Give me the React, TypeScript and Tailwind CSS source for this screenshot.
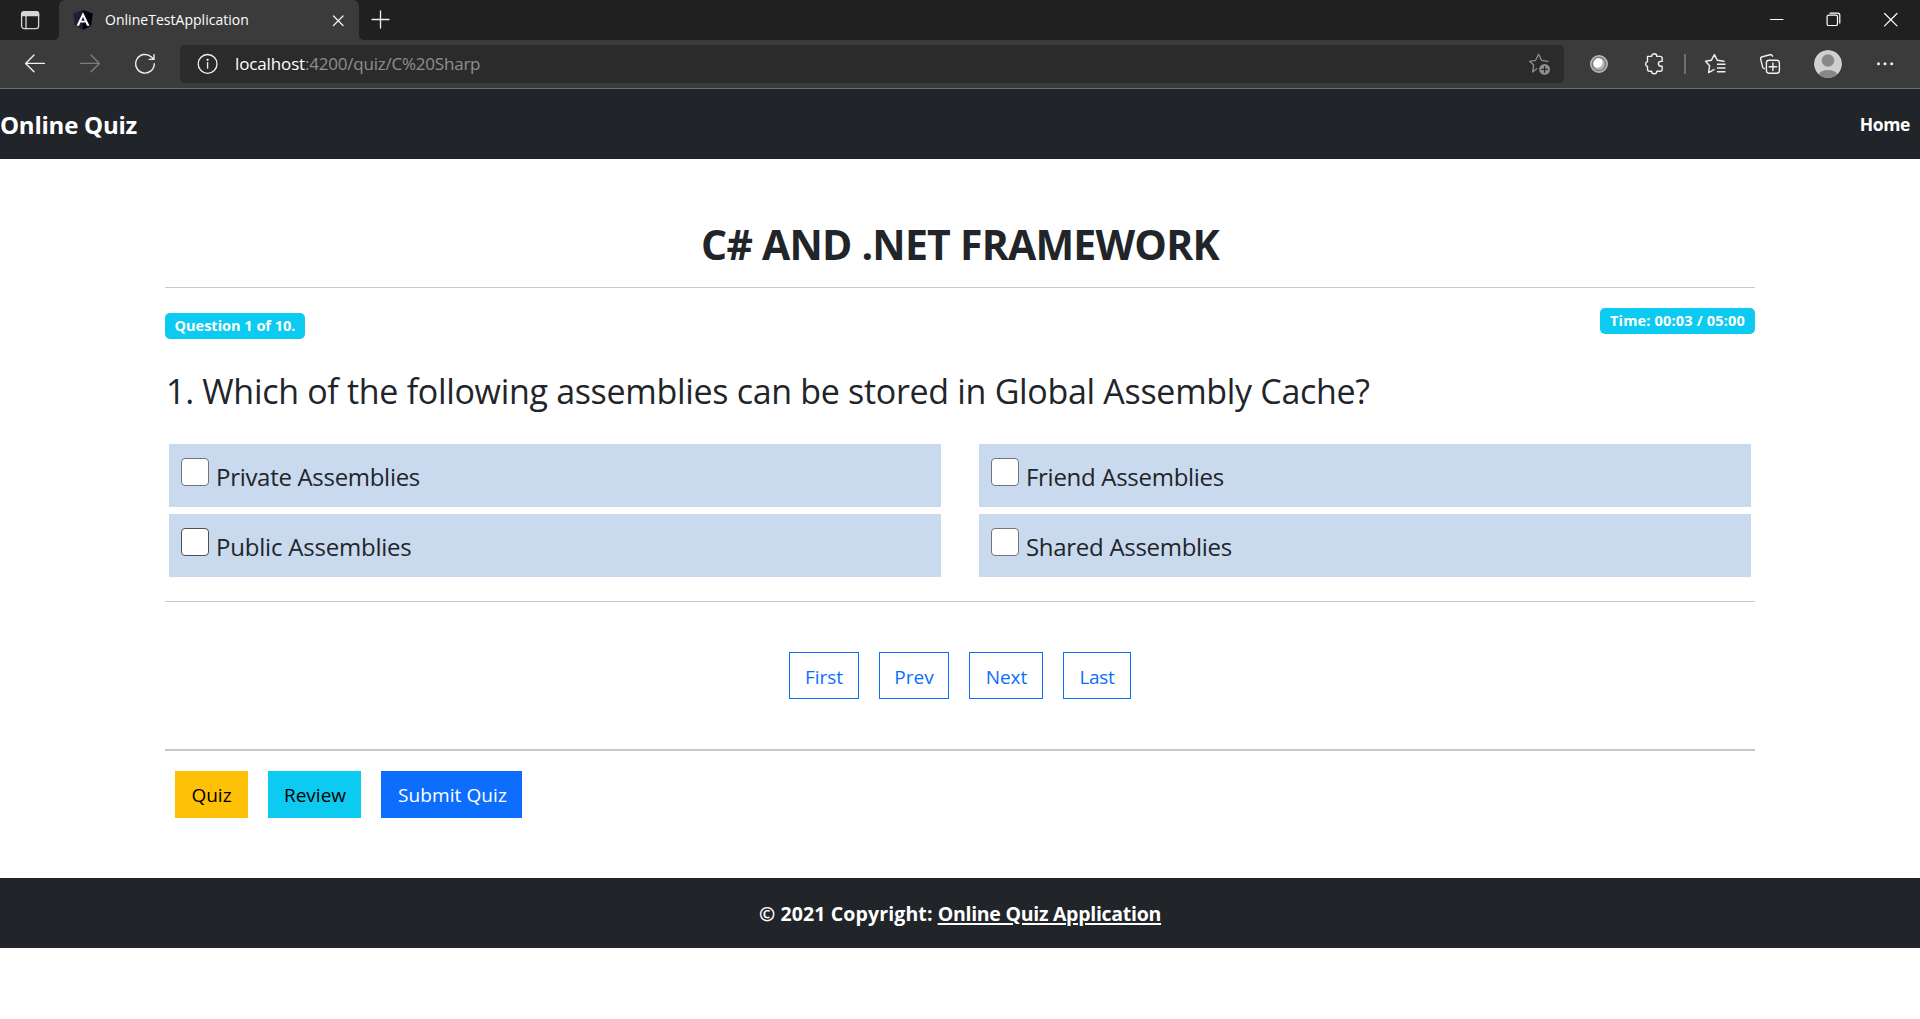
import type { ReactNode } from "react";

function Icon({ children, className = "text-[#f0f0f0]", width = 1.4 }: { children: ReactNode; className?: string; width?: number }) {
  return (
    <svg
      viewBox="0 0 24 24"
      fill="none"
      stroke="currentColor"
      strokeWidth={width}
      strokeLinecap="round"
      strokeLinejoin="round"
      className={"block h-6 w-6 shrink-0 " + className}
    >
      {children}
    </svg>
  );
}

function TabStrip() {
  return (
    <div className="flex h-10 bg-[#3b3b3b]">
      <div className="flex w-[59px] items-center rounded-br-[5px] bg-[#202020] pl-[18px]">
        <Icon className="text-[#d6d6d6]" width={1.3}>
          <rect x="3.6" y="3.6" width="17" height="17" rx="2.6" />
          <path d="M3.6 6.2a2.6 2.6 0 0 1 2.6-2.6h11.8a2.6 2.6 0 0 1 2.6 2.6v1.4H3.6z" fill="currentColor" />
          <path d="M8 8.5v12" />
        </Icon>
      </div>
      <div className="w-[300px] bg-[#202020]">
        <div className="flex h-10 items-center rounded-t-[6px] bg-[#3b3b3b] pr-[9px] pl-[13px]">
          <svg viewBox="0 0 22 22" className="block h-[22px] w-[22px] shrink-0">
            <path d="M11 1 1.2 4.4l1.5 12L11 21z" fill="#1d2030" />
            <path d="m11 1 9.8 3.4-1.5 12L11 21z" fill="#02030f" />
            <path d="M11 3.2 4.5 16.8h2.6l1.3-3.2h5.2l1.3 3.2h2.6zm0 4.8 1.7 3.7H9.3z" fill="#fff" />
          </svg>
          <span className="ml-[11px] pb-px text-[14px] tracking-[0.03px] text-white">OnlineTestApplication</span>
          <div className="ml-auto">
            <Icon width={1.3}>
              <path d="M7.5 8l9.5 9.5M17 8l-9.5 9.5" />
            </Icon>
          </div>
        </div>
      </div>
      <div className="flex flex-1 items-center rounded-bl-[5px] bg-[#202020] pr-[17px] pl-[9px]">
        <Icon width={1.3}>
          <path d="M4 11.5h17M12.5 3v17" />
        </Icon>
        <div className="ml-auto flex items-center gap-[33px]">
          <Icon className="text-white" width={1}>
            <path d="M5.5 11.5h12.5" />
          </Icon>
          <Icon className="text-white" width={1.2}>
            <rect x="5.1" y="7.1" width="10.4" height="10.4" rx="1.6" />
            <path d="M8 5.1h7.6a2.2 2.2 0 0 1 2.2 2.2v7.8" />
          </Icon>
          <Icon className="text-white" width={1.2}>
            <path d="M5.6 5.5l12.4 12.4M18 5.5L5.6 17.9" />
          </Icon>
        </div>
      </div>
    </div>
  );
}

function Toolbar() {
  return (
    <div className="flex h-[49px] items-center border-b border-[#6c6c6c] bg-[#3b3b3b] pr-[23px] pl-[23px]">
      <Icon>
        <path d="M21.4 11.4H2.7M11 3 2.6 11.4 11 19.8" />
      </Icon>
      <Icon className="ml-[31px] text-[#7d7d7d]">
        <path d="M2.6 11.4h18.7M13 3l8.4 8.4-8.4 8.4" />
      </Icon>
      <Icon className="ml-[31px] text-[#f0f0f0]">
        <path d="M21.3 11.8A9.3 9.3 0 1 1 18.4 5l2.3 2.2M21 2.6v4.8h-4.8" />
      </Icon>
      <div className="ml-[23px] flex h-[38px] flex-1 items-center rounded-[5px] bg-[#2b2b2b] pr-3 pl-4">
        <Icon width={1.3}>
          <circle cx="11.6" cy="11.9" r="9.4" />
          <path d="M11.6 10.6v5.6" />
          <circle cx="11.6" cy="7.8" r=".5" fill="currentColor" />
        </Icon>
        <p className="ml-[15px] text-[17px] text-[#8f8f8f]">
          <span className="tracking-[-0.13px] text-white">localhost</span>
          <span className="tracking-[-0.22px]">:4200/quiz/C%20Sharp</span>
        </p>
        <Icon className="ml-auto text-[#8f8f8f]" width={1.3}>
          <path d="M8.6 16.7 4.6 20l1.1-6.9L1.6 9.3l6-1 3-6 3 6 6.4 1" />
          <circle cx="16.6" cy="17.4" r="5.4" fill="currentColor" stroke="none" />
          <path d="M16.6 14.6v5.6M13.8 17.4h5.6" stroke="#2b2b2b" />
        </Icon>
      </div>
      <Icon className="ml-[23px]">
        <circle cx="12" cy="12" r="8.3" fill="#8a8a8a" stroke="#b9b9b9" />
        <circle cx="12" cy="12" r="6.4" fill="#b5b5b5" stroke="#777" strokeWidth="1" />
        <ellipse cx="11" cy="11" rx="4.4" ry="4.9" transform="rotate(40 11 11)" fill="#fff" stroke="none" />
      </Icon>
      <Icon className="ml-8 text-[#f0f0f0]">
        <path d="M4.5 4.4h4.1a2.6 2.6 0 0 1 5.2 0h3.4a2 2 0 0 1 2 2v3h-1.4a2.4 2.4 0 0 0 0 4.8h1.4v3a2 2 0 0 1-2 2h-3.4a2.6 2.6 0 0 1-5.2 0H6.5a2 2 0 0 1-2-2v-2.7a2.6 2.6 0 0 1 0-5z" />
      </Icon>
      <div className="ml-[17px] h-5 w-[2px] bg-[#6e6e6e]" />
      <Icon className="ml-[17px] text-[#f0f0f0]">
        <path d="M11 17.6 5.6 20.6l1-6.8L2.5 9.3l5.8-1L11.4 2.6l3 5.7 6.6.9M14.5 12.3H22M14.5 16H22M14.5 19.7H22" />
      </Icon>
      <Icon className="ml-[31px] text-[#f0f0f0]">
        <path d="M6.4 16.6c-1-.3-1.6-.9-1.8-1.8L2.7 7.4c-.3-1.2.4-2.3 1.6-2.6l7.6-2c1.2-.3 2.3.3 2.7 1.4" />
        <rect x="8.4" y="8.2" width="13" height="13" rx="2.6" />
        <path d="M14.9 10.9v7.6M11.1 14.7h7.6" />
      </Icon>
      <svg viewBox="0 0 28 28" className="ml-8 block h-7 w-7 shrink-0 overflow-hidden rounded-full">
        <circle cx="14" cy="14" r="14" fill="#d2d0ce" />
        <circle cx="14" cy="10.5" r="6.2" fill="#8a8886" />
        <path d="M4 25a10.8 8 0 0 1 20 0l-4 3H8z" fill="#8a8886" />
      </svg>
      <Icon className="ml-[31px] text-[#f0f0f0]">
        <g fill="currentColor" stroke="none">
          <circle cx="5.5" cy="11.8" r="1.5" />
          <circle cx="12" cy="11.8" r="1.5" />
          <circle cx="18.7" cy="11.8" r="1.5" />
        </g>
      </Icon>
    </div>
  );
}

function Option({ label, spacing, active = false }: { label: string; spacing: string; active?: boolean }) {
  return (
    <label className="flex h-[63px] items-start bg-[#c9d9ee] pt-[14px] pl-3">
      <span className={"h-[28px] w-[28px] shrink-0 rounded-[4px] border bg-white " + (active ? "border-[#4f4f4f]" : "border-[#767676]")} />
      <span className={"ml-[7px] text-[24px] leading-[38px] " + spacing}>{label}</span>
    </label>
  );
}

function Badge({ children, className }: { children: ReactNode; className: string }) {
  return (
    <span className={"flex h-[26px] items-center justify-center rounded-[5px] bg-[#0dcaf0] pt-px text-[14.5px] leading-none font-bold text-white " + className}>
      {children}
    </span>
  );
}

function Button({ children, className }: { children: ReactNode; className: string }) {
  return <button className={"h-[47px] text-[19px] leading-none whitespace-nowrap " + className}>{children}</button>;
}

export default function App() {
  return (
    <div className="min-h-[1019px] bg-white font-['Open_Sans','Noto_Sans',sans-serif] text-[#212529]">
      <TabStrip />
      <Toolbar />
      <nav className="flex h-[70px] items-center justify-between bg-[#212529] pr-[10px] font-bold text-white">
        <span className="pt-px text-[24px] tracking-[-0.23px]">Online Quiz</span>
        <span className="text-[17.5px] tracking-[-0.4px]">Home</span>
      </nav>

      <main className="mx-auto h-[719px] w-[1590px] pt-[56px]">
        <h1 className="h-[72px] text-center text-[41px] leading-[58px] font-bold tracking-[-0.78px]">C# AND .NET FRAMEWORK</h1>
        <hr className="border-[#c8c9ca]" />
        <div className="flex items-start justify-between pt-5">
          <Badge className="mt-[5px] w-[140px]">Question 1 of 10.</Badge>
          <Badge className="w-[155px] tracking-[0.17px]">Time: 00:03 / 05:00</Badge>
        </div>
        <h2 className="mt-[25px] h-[80px] pl-px text-[34px] leading-[54px] tracking-[-0.31px] whitespace-nowrap">
          1. Which of the following assemblies can be stored in Global Assembly Cache?
        </h2>
        <div className="grid grid-cols-2 gap-x-[38px] gap-y-[7px] px-1">
          <Option label="Private Assemblies" spacing="tracking-[-0.3px]" />
          <Option label="Friend Assemblies" spacing="tracking-[-0.29px]" />
          <Option label="Public Assemblies" spacing="tracking-[-0.21px]" active />
          <Option label="Shared Assemblies" spacing="tracking-[-0.29px]" />
        </div>
        <hr className="mt-6 border-[#c8c9ca]" />
        <div className="mt-[50px] flex justify-center gap-5 text-[#0d6efd]">
          <Button className="w-[70px] border border-[#0d6efd] pt-1">First</Button>
          <Button className="w-[70px] border border-[#0d6efd] pt-1">Prev</Button>
          <Button className="w-[74px] border border-[#0d6efd] pt-1 pl-px">Next</Button>
          <Button className="w-[68px] border border-[#0d6efd] pt-1 tracking-[-0.3px]">Last</Button>
        </div>
        <hr className="mt-[50px] border-t-2 border-[#c8c8c8]" />
        <div className="mt-5 flex gap-5 pl-[10px]">
          <Button className="w-[73px] bg-[#ffc107] pt-[2px] text-black">Quiz</Button>
          <Button className="w-[93px] bg-[#0dcaf0] pt-[2px] pl-px text-black">Review</Button>
          <Button className="w-[141px] bg-[#0d6efd] pt-[2px] pl-[2px] tracking-[0.1px] text-white">Submit Quiz</Button>
        </div>
      </main>

      <footer className="flex h-[70px] items-center justify-center bg-[#212529] pt-px text-[19.5px] font-bold text-white">
        <span className="tracking-[0.13px]">© 2021 Copyright:</span>
        <a className="ml-[5px] tracking-[-0.27px] underline decoration-[2px] underline-offset-[2px]">Online Quiz Application</a>
      </footer>
    </div>
  );
}
